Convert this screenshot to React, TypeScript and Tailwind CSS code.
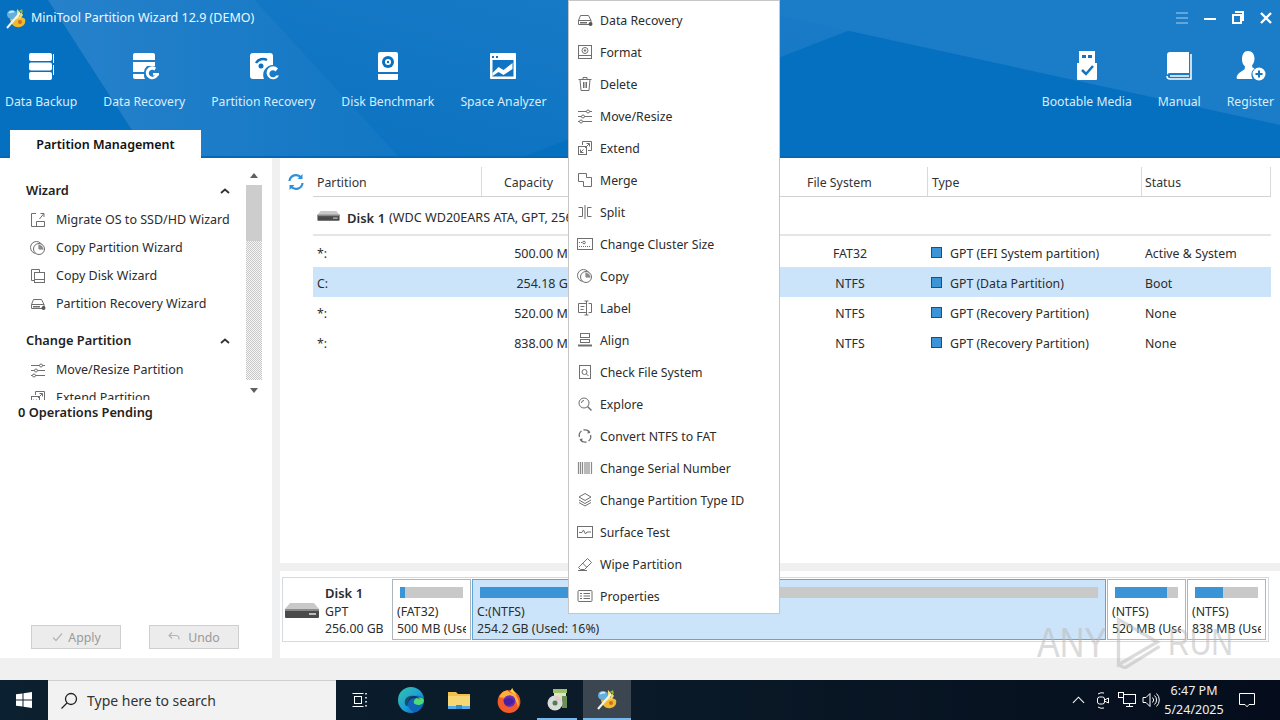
import React from 'react'

const FONT = 'font-["Noto_Sans",sans-serif]'

const Ico = ({ children, className }: { children: React.ReactNode; className?: string }) => (
  <svg viewBox="0 0 16 16" width="16" height="16" fill="none" stroke="#6f6f6f" strokeWidth="1" className={className}>
    {children}
  </svg>
)

const HddIcon = () => (
  <Ico>
    <path d="M3.500 3.500h8l2.500 5v4H1.500v-4z M1.500 8.500h12.500" />
    <path d="M3 10h7v1.500H3z" fill="#6f6f6f" stroke="none" />
    <circle cx="13.500" cy="12" r="2" fill="#555" stroke="none" />
  </Ico>
)
const FormatIcon = () => (
  <Ico>
    <rect x="1.500" y="1.500" width="13" height="13" />
    <path d="M1.500 11.500h13" />
    <circle cx="8" cy="6.500" r="3" />
    <circle cx="8" cy="6.500" r="0.800" fill="#6f6f6f" />
  </Ico>
)
const TrashIcon = () => (
  <Ico>
    <path d="M1.500 3.500h13 M6 3.500V1.500h4v2 M3 3.500l1 11h8l1-11 M6.500 6v6 M8 6v6 M9.500 6v6" />
  </Ico>
)
const SlidersIcon = () => (
  <Ico>
    <path d="M1 3.500h14 M1 8.500h14 M1 13.500h14" />
    <circle cx="11" cy="3.500" r="1.500" fill="#fff" />
    <circle cx="6" cy="8.500" r="1.500" fill="#fff" />
    <circle cx="4" cy="13.500" r="1.500" fill="#fff" />
  </Ico>
)
const ExtendIcon = () => (
  <Ico>
    <path d="M5.500 5V1.500h9v9H11" />
    <rect x="1.500" y="6.500" width="8" height="8" />
    <path d="M8 8l4-4 M9.500 3.500H12.500V6.500 M3.500 12.500l3-3 M3.500 9.500v3h3" />
  </Ico>
)
const MergeIcon = () => (
  <Ico>
    <path d="M1.500 1.500h8v4h5v9h-8v-5h-5z" />
  </Ico>
)
const SplitIcon = () => (
  <Ico>
    <path d="M8 1v14 M1.500 3.500h4v9h-4 M14.500 3.500h-4v9h4" />
  </Ico>
)
const ClusterIcon = () => (
  <Ico>
    <rect x="0.500" y="2.500" width="15" height="11" />
    <path d="M2 6.500h4 M2 10.500h12" strokeDasharray="1 1" />
    <circle cx="7" cy="6.500" r="1.300" />
  </Ico>
)
const CopyPieIcon = () => (
  <Ico>
    <circle cx="6.500" cy="7.500" r="6" />
    <circle cx="9" cy="9" r="5.500" fill="#fff" />
    <path d="M9 9V4.500 M9 9h4.500" />
    <path d="M9 9V5a4 4 0 0 1 4 4z" fill="#8a8a8a" stroke="none" />
  </Ico>
)
const LabelIcon = () => (
  <Ico>
    <path d="M9.500 3.500h-8v9h8 M9.500 1v14 M7.500 1h4 M7.500 15h4 M11.500 3.500h3v9h-3 M3.500 6.500h4 M3.500 9.500h3" />
  </Ico>
)
const AlignIcon = () => (
  <Ico>
    <rect x="3.500" y="1.500" width="9" height="4" />
    <rect x="3.500" y="7.500" width="9" height="3" />
    <path d="M1 13.500h14" strokeWidth="2" />
  </Ico>
)
const CheckIcon = () => (
  <Ico>
    <rect x="2.500" y="1.500" width="11" height="13" />
    <circle cx="7.500" cy="8" r="2.500" />
    <path d="M9.500 10l2 2" />
  </Ico>
)
const ExploreIcon = () => (
  <Ico>
    <circle cx="7" cy="7" r="5" />
    <path d="M10.500 10.500l4 4" strokeWidth="1.500" />
    <path d="M4.500 7a2.500 2.500 0 0 1 2.500-2.500" />
  </Ico>
)
const ConvertIcon = () => (
  <Ico>
    <path d="M2.500 9a5.500 5.500 0 0 1 2-6 M6.500 2a6 6 0 0 1 6 2 M13.500 7a5.500 5.500 0 0 1-2 6 M9.500 14a6 6 0 0 1-6-2" strokeWidth="1.300" />
    <path d="M11 2l2.500 3-3 .5z M5 14l-2.500-3 3-.5z" fill="#6f6f6f" stroke="none" />
  </Ico>
)
const BarcodeIcon = () => (
  <Ico>
    <path d="M1.500 2v12 M3.500 2v12 M5.500 2v12 M8 2v12 M10 2v12 M12 2v12 M14.500 2v12" strokeWidth="1.200" stroke="#8a8a8a" />
  </Ico>
)
const LayersIcon = () => (
  <Ico>
    <path d="M8 1.500l6 3.500-6 3.500L2 5z" />
    <path d="M2 8l6 3.500L14 8 M2 10.500L8 14l6-3.500" />
  </Ico>
)
const SurfaceIcon = () => (
  <Ico>
    <rect x="0.500" y="2.500" width="15" height="11" />
    <path d="M2 8.500h3l1.500-2.500 2 4 1.500-2h4" />
  </Ico>
)
const EraserIcon = () => (
  <Ico>
    <path d="M10.500 2.500l4 4-7 7H3.500l-2-2z M5.500 7l4 4 M1 14.500h9" />
  </Ico>
)
const PropsIcon = () => (
  <Ico>
    <rect x="1" y="2.500" width="14" height="11" rx="1" />
    <path d="M3 5.500h2 M3 8h2 M3 10.500h2 M6.500 5.500h6.500 M6.500 8h6.500 M6.500 10.500h6.500" />
  </Ico>
)
const MigrateIcon = () => (
  <Ico>
    <path d="M6 1.500H1.500v13h13V11 M6.500 14.500V9.500h8v5 M9.500 7l4-5 M10.500 1.500h3.500v3.500" />
  </Ico>
)
const CopyDiskIcon = () => (
  <Ico>
    <path d="M5 12.500H1.500v-11h8V5" />
    <rect x="4.500" y="4.500" width="10" height="10" />
    <path d="M4.500 11.500h10" />
  </Ico>
)

const menuItems: [string, React.ReactNode][] = [
  ['Data Recovery', <HddIcon />],
  ['Format', <FormatIcon />],
  ['Delete', <TrashIcon />],
  ['Move/Resize', <SlidersIcon />],
  ['Extend', <ExtendIcon />],
  ['Merge', <MergeIcon />],
  ['Split', <SplitIcon />],
  ['Change Cluster Size', <ClusterIcon />],
  ['Copy', <CopyPieIcon />],
  ['Label', <LabelIcon />],
  ['Align', <AlignIcon />],
  ['Check File System', <CheckIcon />],
  ['Explore', <ExploreIcon />],
  ['Convert NTFS to FAT', <ConvertIcon />],
  ['Change Serial Number', <BarcodeIcon />],
  ['Change Partition Type ID', <LayersIcon />],
  ['Surface Test', <SurfaceIcon />],
  ['Wipe Partition', <EraserIcon />],
  ['Properties', <PropsIcon />]
]

const WhiteIcon = ({ children }: { children: React.ReactNode }) => (
  <svg viewBox="0 0 32 32" width="32" height="32" fill="#fff">
    {children}
  </svg>
)

const BackupTool = () => (
  <WhiteIcon>
    <rect x="4" y="3" width="23" height="8" rx="2" />
    <rect x="4" y="12.500" width="23" height="8" rx="2" />
    <rect x="4" y="22" width="23" height="8" rx="2" />
    <path d="M28 4h1v9h-1z M28 15h1v10h-1z" />
  </WhiteIcon>
)
const RecoveryTool = () => (
  <WhiteIcon>
    <path d="M5 5a2 2 0 0 1 2-2h18a2 2 0 0 1 2 2v5H5z" />
    <path d="M5 12h22v4h-8a9 9 0 0 0-3 6H5z" />
    <path d="M5 24h11a8 8 0 0 0 1 5H7a2 2 0 0 1-2-2z" />
    <path d="M28 17.500a6.500 6.500 0 1 0 2.500 7h-3a3.500 3.500 0 1 1-1-4z" />
    <path d="M25 23h6v2.500h-6z" />
  </WhiteIcon>
)
const PartRecoveryTool = () => (
  <WhiteIcon>
    <path d="M3 6a3 3 0 0 1 3-3h17a3 3 0 0 1 3 3v9a10 10 0 0 0-9 14H6a3 3 0 0 1-3-3z" />
    <path d="M9 13a8 8 0 0 1 11-3" stroke="#0a70c0" strokeWidth="2.500" fill="none" />
    <circle cx="14" cy="16" r="2.500" fill="#0a70c0" />
    <path d="M31 18.500a6.500 6.500 0 1 0 1 7h-3a3.500 3.500 0 1 1-.5-4z" />
  </WhiteIcon>
)
const BenchTool = () => (
  <WhiteIcon>
    <path d="M6 4a2 2 0 0 1 2-2h16a2 2 0 0 1 2 2v18H6z" />
    <path d="M6 24h20v5a1 1 0 0 1-1 1H7a1 1 0 0 1-1-1z" />
    <circle cx="16" cy="12" r="6" fill="#0a70c0" />
    <circle cx="16" cy="12" r="3" fill="#fff" />
    <circle cx="16" cy="12" r="1.200" fill="#0a70c0" />
  </WhiteIcon>
)
const SpaceTool = () => (
  <WhiteIcon>
    <path d="M3 4a1 1 0 0 1 1-1h24a1 1 0 0 1 1 1v24a1 1 0 0 1-1 1H4a1 1 0 0 1-1-1z" />
    <path d="M5.500 10h21v16.500h-21z" fill="#0f74c3" />
    <path d="M5 6h2v2H5z M9 6h2v2H9z" fill="#0f74c3" />
    <path d="M5.500 23l6-6 5 3 9-7v6l-9 6-5-3-6 4z" fill="#fff" />
  </WhiteIcon>
)
const BootTool = () => (
  <WhiteIcon>
    <path d="M8 1h16v12H8z" />
    <path d="M11 5h4v3h-4z M17 5h4v3h-4z" fill="#0f74c3" />
    <path d="M6 13h20v16a1 1 0 0 1-1 1H7a1 1 0 0 1-1-1z" />
    <path d="M11 20l4 4 7-8" stroke="#1575bd" strokeWidth="2.500" fill="none" />
  </WhiteIcon>
)
const ManualTool = () => (
  <WhiteIcon>
    <path d="M4 5a3 3 0 0 1 3-3h19v21H7a3 3 0 0 0-3 2z" />
    <path d="M28 4v25H7a3 3 0 0 1-3-3" stroke="#fff" strokeWidth="1.500" fill="none" />
    <path d="M7 26h19" stroke="#fff" strokeWidth="1.500" />
  </WhiteIcon>
)
const RegisterTool = () => (
  <WhiteIcon>
    <path d="M14 1c4 0 6.500 3 6.500 7.500 0 3-1 5-2.500 7l.5 2 2 1a8 8 0 0 0-2 10.500H3a3 3 0 0 1 0-3c1-3 5-5 7.500-6.500l.5-3c-2-2-3-4-3-7C8 4 10 1 14 1z" />
    <circle cx="25" cy="24" r="6.500" />
    <path d="M21.500 24h7 M25 20.500v7" stroke="#1575bd" strokeWidth="2" />
  </WhiteIcon>
)

const leftTools: [string, React.ReactNode][] = [
  ['Data Backup', <BackupTool />],
  ['Data Recovery', <RecoveryTool />],
  ['Partition Recovery', <PartRecoveryTool />],
  ['Disk Benchmark', <BenchTool />],
  ['Space Analyzer', <SpaceTool />]
]
const rightTools: [string, React.ReactNode][] = [
  ['Bootable Media', <BootTool />],
  ['Manual', <ManualTool />],
  ['Register', <RegisterTool />]
]

const Tool = ({ label, icon }: { label: string; icon: React.ReactNode }) => (
  <div className="flex flex-col items-center">
    <div className="h-[32px]">{icon}</div>
    <div className="mt-[11px] text-[12.200px] leading-[18px] text-[#d9ecfa] whitespace-nowrap">{label}</div>
  </div>
)

const AppLogo = () => (
  <svg viewBox="0 0 22 22" width="22" height="22">
    <path d="M5 12c2-3 12-3 15 0 1 4-1 7-5 8-5 1-9-2-10-8z" fill="#eebb2c" />
    <path d="M12 2l3 3-1 6-3 2z M16 5l2 3-3 4-1-1z" fill="#f3dd6e" />
    <ellipse cx="7" cy="7.500" rx="5" ry="4.500" fill="#63b0e0" />
    <path d="M4 6a4 3 0 0 1 5-1" stroke="#d6eefb" strokeWidth="1.500" fill="none" />
    <path d="M2 21L15 6" stroke="#f4f4ec" strokeWidth="2" />
    <circle cx="15" cy="15" r="2" fill="#d8662a" />
    <path d="M14 4l3-2 1 4z" fill="#93b93c" />
  </svg>
)

const DiskGlyph = ({ w, h }: { w: number; h: number }) => (
  <svg viewBox="0 0 34 20" width={w} height={h}>
    <path d="M5 3h24l5 6H0z" fill="#c9c9c9" />
    <path d="M0 9h34v8a1 1 0 0 1-1 1H1a1 1 0 0 1-1-1z" fill="#4a4a4a" />
    <path d="M0 9h34v2H0z" fill="#8a8a8a" />
    <path d="M24 13h7v2h-7z" fill="#bcbcbc" />
  </svg>
)

const wizardItems: [string, React.ReactNode][] = [
  ['Migrate OS to SSD/HD Wizard', <MigrateIcon />],
  ['Copy Partition Wizard', <CopyPieIcon />],
  ['Copy Disk Wizard', <CopyDiskIcon />],
  ['Partition Recovery Wizard', <HddIcon />]
]

const SideRow = ({ label, icon }: { label: string; icon: React.ReactNode }) => (
  <div className="flex h-[28px] items-center pl-[30px] text-[12.500px] text-[#2c2c2c] whitespace-nowrap">
    <span className="w-[26px] shrink-0">{icon}</span>
    <span>{label}</span>
  </div>
)

const Caret = () => (
  <svg viewBox="0 0 10 6" width="10" height="6" className="mr-[42px]">
    <path d="M1 5l4-3.500L9 5" stroke="#333" strokeWidth="1.800" fill="none" />
  </svg>
)

const SideHead = ({ label }: { label: string }) => (
  <div className="flex h-[24px] items-center justify-between pl-[26px] text-[12.800px] font-semibold text-[#222]">
    <span>{label}</span>
    <Caret />
  </div>
)

const Sidebar = () => (
  <div className="flex w-[272px] shrink-0 flex-col bg-white">
    <div className="relative h-[242px] overflow-hidden pt-[21px]">
      <SideHead label="Wizard" />
      <div className="mt-[3px]">
        {wizardItems.map(([l, i]) => (
          <SideRow key={l} label={l} icon={i} />
        ))}
      </div>
      <div className="mt-[11px]">
        <SideHead label="Change Partition" />
      </div>
      <div className="mt-[3px]">
        <SideRow label="Move/Resize Partition" icon={<SlidersIcon />} />
        <SideRow label="Extend Partition" icon={<ExtendIcon />} />
      </div>
      <div className="absolute left-[246px] top-[10px] flex h-[227px] w-[16px] flex-col items-center bg-white">
        <svg viewBox="0 0 8 5" width="8" height="5" className="mt-[5px] mb-[7px]">
          <path d="M4 0l4 5H0z" fill="#606060" />
        </svg>
        <div className="h-[56px] w-full bg-[#cdcdcd]" />
        <div className="flex-1 w-full bg-[repeating-conic-gradient(#c8c8c8_0_25%,#f6f6f6_0_50%)] bg-[length:2px_2px]" />
        <svg viewBox="0 0 8 5" width="8" height="5" className="mt-[8px] mb-[2px]">
          <path d="M4 5l4-5H0z" fill="#606060" />
        </svg>
      </div>
    </div>
    <div className="mt-[3px] pl-[18px] text-[12.800px] font-semibold leading-[18px] text-[#222]">0 Operations Pending</div>
    <div className="mt-auto mb-[9px] flex gap-[28px] pl-[31px]">
      <div className="flex h-[24px] w-[90px] items-center justify-center gap-[5px] border border-[#cfcfcf] bg-[#ececec] text-[12.300px] text-[#9a9a9a]">
        <svg viewBox="0 0 12 12" width="12" height="12">
          <path d="M2 6.500l3 3 6-7" stroke="#b5b5b5" strokeWidth="1.200" fill="none" />
        </svg>
        <span className="pt-[3px]">Apply</span>
      </div>
      <div className="flex h-[24px] w-[90px] items-center justify-center gap-[8px] border border-[#cfcfcf] bg-[#ececec] text-[12.300px] text-[#9a9a9a]">
        <svg viewBox="0 0 12 12" width="12" height="12">
          <path d="M1 4.500h7a3 3 0 0 1 3 3v1 M4 1.500l-3 3 3 3" stroke="#b5b5b5" strokeWidth="1.100" fill="none" />
        </svg>
        <span className="pt-[3px]">Undo</span>
      </div>
    </div>
  </div>
)

const COLS = 'grid grid-cols-[169px_100px_96px_96px_154px_214px_129px]'

const rows = [
  { p: '*:', cap: '500.00 MB', fs: 'FAT32', type: 'GPT (EFI System partition)', status: 'Active & System' },
  { p: 'C:', cap: '254.18 GB', fs: 'NTFS', type: 'GPT (Data Partition)', status: 'Boot', selected: true },
  { p: '*:', cap: '520.00 MB', fs: 'NTFS', type: 'GPT (Recovery Partition)', status: 'None' },
  { p: '*:', cap: '838.00 MB', fs: 'NTFS', type: 'GPT (Recovery Partition)', status: 'None' }
]

const heads = ['Partition', 'Capacity', 'Used', 'Unused', 'File System', 'Type', 'Status']

const PartTable = () => (
  <div className="flex h-[413px] border-b-[8px] border-[#f0f0f0] pt-[9px]">
    <div className="w-[33px] shrink-0 pl-[7px] pt-[6px]">
      <svg viewBox="0 0 18 18" width="18" height="18" fill="none" stroke="#2f8fd8" strokeWidth="2.200">
        <path d="M2.500 8a6.500 6.500 0 0 1 11.500-3.500 M15.500 10a6.500 6.500 0 0 1-11.500 3.500" />
        <path d="M15.500 1v5h-5z M2.500 17v-5h5z" fill="#2f8fd8" stroke="none" />
      </svg>
    </div>
    <div className="w-[958px] shrink-0 text-[12.300px] text-[#2c2c2c]">
      <div className={`${COLS} h-[30px] items-center border-b border-[#d2d2d2]`}>
        {heads.map((h, i) => (
          <div
            key={h}
            className={`flex h-[29px] items-center border-r border-[#d9d9d9] pt-[4px] text-[#333] ${i === 4 ? 'pl-[33px]' : i === 1 ? 'pl-[22px]' : i === 6 ? 'pl-[3px]' : 'pl-[4px]'}`}
          >
            {h}
          </div>
        ))}
      </div>
      <div className="flex h-[39px] items-center border-b-2 border-[#e6e6e6] pl-[3px]">
        <DiskGlyph w={25} h={13} />
        <span className="ml-[6px] pt-[6px] text-[13px] font-semibold">Disk 1</span>
        <span className="ml-[4px] pt-[6px] text-[12.600px] whitespace-nowrap">(WDC WD20EARS ATA, GPT, 256.00 GB)</span>
      </div>
      <div className="pt-[1px]">
        {rows.map((r, i) => (
          <div key={i} className={`${COLS} h-[30px] items-center ${r.selected ? 'bg-[#cce4f9]' : ''}`}>
            <div className="pl-[4px] pt-[4px]">{r.p}</div>
            <div className="pr-[6px] pt-[4px] text-right text-[12.500px]">{r.cap}</div>
            <div />
            <div />
            <div className="pr-[2px] pt-[4px] text-center">{r.fs}</div>
            <div className="flex items-center pl-[3px]">
              <span className="mr-[8px] h-[11px] w-[11px] border border-[#1f4f78] bg-[#3a94d6]" />
              <span className="pt-[4px]">{r.type}</span>
            </div>
            <div className="pl-[3px] pt-[4px] whitespace-nowrap">{r.status}</div>
          </div>
        ))}
      </div>
    </div>
  </div>
)

const Cell = ({ w, a, b, used, selected }: { w: string; a: string; b: string; used: string; selected?: boolean }) => (
  <div className={`${w} shrink-0 border px-[4px] pt-[7px] text-[12.300px] leading-[17px] text-[#2c2c2c] ${selected ? 'border-[#5da6dc] bg-[#cce4f9]' : 'border-[#aeb6bc] bg-white'}`}>
    <div className="mx-[3px] h-[11px] bg-[#c9c9c9]">
      <div className={`${used} h-full bg-[#3a94d6]`} />
    </div>
    <div className="mt-[5px] overflow-hidden whitespace-nowrap">{a}</div>
    <div className="overflow-hidden whitespace-nowrap">{b}</div>
  </div>
)

const DiskMap = () => (
  <div className="flex h-[87px] items-start pl-[2px] pt-[6px]">
    <div className="flex h-[65px] w-[987px] items-center border border-[#d4dade] pr-[2px]">
      <div className="flex w-[109px] shrink-0 items-center pl-[2px]">
        <DiskGlyph w={34} h={20} />
        <div className="ml-[6px] pt-[4px] text-[12.300px] leading-[17.500px] text-[#2c2c2c]">
          <div className="text-[13px] font-semibold">Disk 1</div>
          <div>GPT</div>
          <div className="whitespace-nowrap">256.00 GB</div>
        </div>
      </div>
      <div className="flex h-[61px] gap-px">
        <Cell w="w-[79px]" a="(FAT32)" b="500 MB (Used: 6%)" used="w-[8%]" />
        <Cell w="w-[634px]" a="C:(NTFS)" b="254.2 GB (Used: 16%)" used="w-[16%]" selected />
        <Cell w="w-[79px]" a="(NTFS)" b="520 MB (Used: 83%)" used="w-[83%]" />
        <Cell w="w-[79px]" a="(NTFS)" b="838 MB (Used: 45%)" used="w-[45%]" />
      </div>
    </div>
  </div>
)

const ContextMenu = () => (
  <div className="absolute left-[568px] top-0 z-10 w-[212px] border border-[#c6c6c6] bg-white pt-[3px] pb-[1px]">
    {menuItems.map(([label, icon]) => (
      <div key={label} className="flex h-[32px] items-center pl-[8px] text-[12.300px] text-[#2c2c2c] whitespace-nowrap">
        <span className="w-[23px] shrink-0">{icon}</span>
        <span className="pt-[2px]">{label}</span>
      </div>
    ))}
  </div>
)

const Header = () => (
  <div className="relative h-[158px] shrink-0 overflow-hidden bg-[#0670c0]">
    <svg className="absolute inset-0" width="1280" height="158" viewBox="0 0 1280 158">
      <defs>
        <linearGradient id="sheen" x1="0" y1="0" x2="1" y2="0">
          <stop offset="0" stopColor="#2681ca" />
          <stop offset="1" stopColor="#1277c4" />
        </linearGradient>
        <linearGradient id="fade" x1="0" y1="1" x2="1" y2="0">
          <stop offset="0" stopColor="#0a72c1" />
          <stop offset="1" stopColor="#1b7cc8" />
        </linearGradient>
      </defs>
      <path d="M255 0L400 158H520L850 30 707 0z" fill="url(#fade)" />
      <path d="M707 0L1280 125V0z" fill="#1b7cc8" />
      <path d="M48 0L150 158H400L255 0z" fill="url(#sheen)" />
      <rect x="0" y="156" width="1280" height="2" fill="#0468b6" />
    </svg>
    <div className="relative flex h-[36px] items-center">
      <div className="ml-[5px]">
        <AppLogo />
      </div>
      <div className="ml-[4px] text-[12.500px] text-[#eef7fd] whitespace-nowrap">MiniTool Partition Wizard 12.9 (DEMO)</div>
      <div className="ml-auto flex items-center gap-[14px] pr-[7px]">
        <svg viewBox="0 0 14 12" width="14" height="12">
          <path d="M1 1h12 M1 6h12 M1 11h12" stroke="#a8d2f0" strokeWidth="1" />
        </svg>
        <svg viewBox="0 0 14 12" width="14" height="12">
          <path d="M1 7h12" stroke="#fff" strokeWidth="2" />
        </svg>
        <svg viewBox="0 0 14 14" width="14" height="14" fill="none" stroke="#fff" strokeWidth="2">
          <path d="M4 1h8v8h-2" />
          <rect x="2" y="4" width="8" height="8" />
        </svg>
        <svg viewBox="0 0 14 14" width="14" height="14">
          <path d="M2 2l10 10 M12 2L2 12" stroke="#fff" strokeWidth="2.400" />
        </svg>
      </div>
    </div>
    <div className="relative flex justify-between pt-[14px] pl-[5px] pr-[6px]">
      <div className="flex gap-[26px]">
        {leftTools.map(([l, i]) => (
          <Tool key={l} label={l} icon={i} />
        ))}
      </div>
      <div className="flex gap-[26px]">
        {rightTools.map(([l, i]) => (
          <Tool key={l} label={l} icon={i} />
        ))}
      </div>
    </div>
    <div className="absolute bottom-0 left-[10px] flex h-[28px] w-[191px] items-center justify-center bg-white pt-[2px] text-[12.500px] font-semibold text-[#111]">
      Partition Management
    </div>
  </div>
)

const Taskbar = () => (
  <div className="flex h-[40px] shrink-0 items-center bg-[linear-gradient(90deg,#0b2030,#0a1a28_50%,#050d1c)] text-white">
    <div className="flex w-[48px] justify-center">
      <svg viewBox="0 0 16 16" width="16" height="16" fill="#fff">
        <path d="M0 2.300L6.500 1.400V7.500H0z M7.500 1.200L16 0V7.500H7.500z M0 8.500H6.500V14.600L0 13.700z M7.500 8.500H16V16L7.500 14.800z" />
      </svg>
    </div>
    <div className="flex h-[40px] w-[288px] items-center border-t border-[#cfcfcf] bg-[#f2f2f2] pl-[12px] text-[14px] text-[#333]">
      <svg viewBox="0 0 18 18" width="18" height="18" fill="none" stroke="#222" strokeWidth="1.300">
        <circle cx="11" cy="7" r="5.500" />
        <path d="M7 11l-5.500 5.500" />
      </svg>
      <span className="ml-[9px]">Type here to search</span>
    </div>
    <div className="flex">
      <div className="flex h-[40px] w-[48px] items-center justify-center">
        <svg viewBox="0 0 16 16" width="16" height="16" fill="none" stroke="#fff" strokeWidth="1">
          <path d="M0.500 1.500h11 M0.500 14.500h11" />
          <rect x="2.500" y="4.500" width="7" height="7" />
          <path d="M14 1v1.500 M14 5v1.500 M14 9v1.500 M14 13v1.500" strokeWidth="1.500" />
        </svg>
      </div>
      <div className="ml-[3px] flex h-[40px] w-[48px] items-center justify-center">
        <svg viewBox="0 0 24 24" width="26" height="26">
          <defs>
            <linearGradient id="edge1" x1="0" y1="0" x2="1" y2="1">
              <stop offset="0" stopColor="#36c6a0" />
              <stop offset="0.500" stopColor="#1ea0d8" />
              <stop offset="1" stopColor="#0d5cb8" />
            </linearGradient>
          </defs>
          <circle cx="12" cy="12" r="12" fill="url(#edge1)" />
          <path d="M24 13c0-3-3-5-7-5-5 0-8 3-8 7 0 4 3 8 8 8 3-1 6-4 7-10z" fill="#0f63b8" />
          <path d="M23 15c-2 2-5 2-7 1-2-1-2-3 0-5 2-2 8-2 8 2z" fill="#4fd97a" />
          <path d="M7 17c-2-4 0-9 6-9 4 0 7 2 8 4-4-3-9-2-11 1-1 2-1 3-1 5z" fill="#0b1a26" opacity="0.600" />
        </svg>
      </div>
      <div className="flex h-[40px] w-[48px] items-center justify-center">
        <svg viewBox="0 0 24 24" width="24" height="24">
          <path d="M1 4h8l2 2h12v15H1z" fill="#f0c24a" />
          <path d="M1 8h22v13H1z" fill="#f7d774" />
          <path d="M9 17h6v4H9z" fill="#2d8fd5" />
          <path d="M1 18h8v3H1z M15 18h8v3h-8z" fill="#56a9e3" />
        </svg>
      </div>
      <div className="ml-[2px] flex h-[40px] w-[48px] items-center justify-center">
        <svg viewBox="0 0 24 24" width="26" height="26">
          <circle cx="12" cy="13.500" r="10.500" fill="#f25c2a" />
          <path d="M3 9c2-4 5-6 8-6 0 2 3 2 6 4 4 3 5 8 3 12C20 12 15 9 10 10 7 10 4 10 3 9z" fill="#fbb03b" />
          <circle cx="12.500" cy="13" r="5.500" fill="#6a2bb8" />
          <path d="M7 12c3-2 7-3 10 1-2 4-6 5-9 3z" fill="#4a1fa0" />
          <path d="M15 1c1 3 3 4 4 7-3-2-5-3-6-4z" fill="#ffcf3f" />
        </svg>
      </div>
      <div className="flex h-[40px] w-[48px] flex-col items-center">
        <div className="flex h-[38px] w-full items-center justify-center">
          <svg viewBox="0 0 26 26" width="26" height="26">
            <path d="M9 3h14v4H9z" fill="#9fc06a" />
            <path d="M10 7h12v12H10z" fill="#dfe6c4" />
            <path d="M18 10h5v12h-5z" fill="#6c8f5a" />
            <circle cx="11" cy="17" r="7.500" fill="#d9dcd8" />
            <path d="M11 10a7 7 0 0 1 6 4l-5 2z" fill="#e8c6cf" />
            <circle cx="11" cy="17" r="2.500" fill="#4d7f56" />
          </svg>
        </div>
        <div className="h-[2px] w-[40px] bg-[#76b9ed]" />
      </div>
      <div className="ml-[2px] flex h-[40px] w-[48px] flex-col items-center bg-[#3b4650]">
        <div className="flex h-[38px] w-full items-center justify-center">
          <AppLogo />
        </div>
        <div className="h-[2px] w-full bg-[#76b9ed]" />
      </div>
    </div>
    <div className="ml-auto flex items-center">
      <svg viewBox="0 0 14 8" width="13" height="8" className="mr-[10px]">
        <path d="M1 7l6-6 6 6" stroke="#fff" strokeWidth="1.100" fill="none" />
      </svg>
      <svg viewBox="0 0 16 18" width="16" height="18" fill="none" stroke="#fff" strokeWidth="1" className="mr-[7px]">
        <rect x="2.500" y="6" width="7" height="7" rx="2" />
        <path d="M9.500 9l4-2v5l-4-2 M3 3a7 7 0 0 1 6-1 M3 16a7 7 0 0 0 6 1" />
      </svg>
      <svg viewBox="0 0 18 16" width="18" height="16" fill="none" stroke="#fff" strokeWidth="1" className="mr-[6px]">
        <rect x="5.500" y="2.500" width="12" height="9" />
        <rect x="0.500" y="0.500" width="5" height="5" fill="#0a1624" />
        <path d="M11.500 11.500v3 M8 14.500h7" />
      </svg>
      <svg viewBox="0 0 18 16" width="18" height="16" fill="none" stroke="#fff" strokeWidth="1" className="mr-[1px]">
        <path d="M1 5.500h3l4-4v13l-4-4H1z M10.500 5.500a3.500 3.500 0 0 1 0 5 M12.500 3.500a6 6 0 0 1 0 9 M14.500 1.500a9 9 0 0 1 0 13" />
      </svg>
      <div className="w-[66px] text-center text-[12.500px] leading-[19px] whitespace-nowrap text-[#f0f0f0]">
        <div>6:47 PM</div>
        <div>5/24/2025</div>
      </div>
      <svg viewBox="0 0 16 16" width="16" height="16" fill="none" stroke="#fff" strokeWidth="1" className="ml-[12px] mr-[25px]">
        <path d="M0.500 1.500h15v11H10L8 14.800 6 12.500H0.500z" />
      </svg>
    </div>
  </div>
)

const Watermark = () => (
  <div className="pointer-events-none absolute left-[1037px] top-[618px] z-20 flex h-[48px] w-[196px] items-center justify-between font-['Liberation_Sans',sans-serif] text-[34px] leading-none text-[#b8b8b8] opacity-50">
    <span className="scale-y-125">ANY</span>
    <svg viewBox="0 0 46 50" width="54" height="54" fill="none" stroke="#b8b8b8" strokeWidth="3" className="ml-[4px]">
      <path d="M4 4l36 21L4 46z" />
      <path d="M4 46l6 3 32-20" />
    </svg>
    <span className="scale-y-125 text-[30px]">RUN</span>
  </div>
)

export default function App() {
  return (
    <div className={`relative flex h-[720px] w-[1280px] flex-col overflow-hidden bg-[#f0f0f0] ${FONT}`}>
      <Header />
      <div className="flex h-[500px] shrink-0">
        <Sidebar />
        <div className="w-[8px] shrink-0 bg-[#f0f0f0]" />
        <div className="flex-1 bg-white">
          <PartTable />
          <DiskMap />
        </div>
      </div>
      <div className="h-[22px] shrink-0 bg-[#f0f0f0]" />
      <Taskbar />
      <ContextMenu />
      <Watermark />
    </div>
  )
}
